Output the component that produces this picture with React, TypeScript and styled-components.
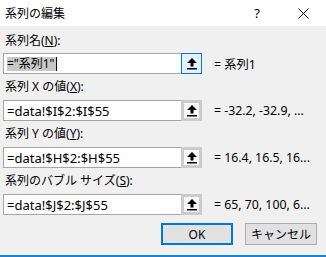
import React from "react";
import styled, { createGlobalStyle } from "styled-components";

const Global = createGlobalStyle`
  html, body { margin: 0; padding: 0; background: #f0f0f0; }
  body { font-family: "Noto Sans", "Noto Sans CJK JP", sans-serif; font-size: 12px; color: #000; }
`;

const Dialog = styled.div`
  width: 326px;
  height: 257px;
  box-sizing: border-box;
  background: #f0f0f0;
  border-bottom: 2px solid #1883d7;
  display: flex;
  flex-direction: column;
  overflow: hidden;
`;

const TitleBar = styled.div`
  height: 26px;
  flex: none;
  background: #ffffff;
  display: flex;
  align-items: center;
  padding-left: 5px;
`;

const Title = styled.div`
  flex: 1;
  font-size: 12px;
  line-height: 26px;
  font-family: "Noto Sans CJK JP", sans-serif;
`;

const TitleButton = styled.div`
  width: 46px;
  height: 26px;
  display: flex;
  align-items: center;
  justify-content: center;
  font-size: 13px;
  font-family: "Noto Sans", sans-serif;
`;

const Body = styled.div`
  display: flex;
  flex-direction: column;
  padding-left: 3px;
`;

const Label = styled.div<{ $first?: boolean }>`
  height: ${(p) => (p.$first ? 27 : 26)}px;
  line-height: 26px;
  padding-top: ${(p) => (p.$first ? 2 : 0)}px;
  box-sizing: border-box;
  padding-left: 2px;
  font-family: "Noto Sans", "Noto Sans CJK JP", sans-serif;
  font-size: 12px;
  white-space: nowrap;
  u { text-decoration: underline; text-underline-offset: 1px; }
`;

const Row = styled.div`
  display: flex;
  align-items: center;
  height: 21px;
`;

const Field = styled.div`
  width: 199px;
  height: 21px;
  box-sizing: border-box;
  border: 1px solid #a5a5a5;
  background: #fff;
  display: flex;
  align-items: stretch;
`;

const FieldText = styled.div`
  flex: 1;
  display: flex;
  align-items: center;
  padding-left: 3px;
  font-family: "Noto Sans", "Noto Sans CJK JP", sans-serif;
  font-size: 13px;
  white-space: nowrap;
  overflow: hidden;
`;

const Selected = styled.span`
  background: #c8c8c8;
  line-height: 14px;
  font-size: 12px;
  padding: 0 1px 0 0;
`;

const Caret = styled.span`
  display: inline-block;
  width: 1px;
  height: 14px;
  background: #000;
`;

const RefButton = styled.div<{ $active?: boolean }>`
  width: 21px;
  margin: -1px -1px -1px 0;
  box-sizing: border-box;
  border: ${(p) => (p.$active ? "1px solid #0078d7" : "3px solid #cccccc")};
  background: ${(p) => (p.$active ? "#e5f1fb" : "#fafafa")};
  display: flex;
  align-items: center;
  justify-content: center;
`;

const Value = styled.div`
  margin-left: 12px;
  font-family: "Noto Sans", "Noto Sans CJK JP", sans-serif;
  font-size: 12.3px;
  white-space: nowrap;
`;

const Buttons = styled.div`
  display: flex;
  justify-content: flex-end;
  gap: 12px;
  padding-right: 9px;
  margin-top: 8px;
`;

const Btn = styled.div<{ $default?: boolean }>`
  width: 72px;
  height: 22px;
  box-sizing: border-box;
  background: #e1e1e1;
  border: ${(p) => (p.$default ? "2px solid #0078d7" : "1px solid #adadad")};
  display: flex;
  align-items: center;
  justify-content: center;
  font-family: "Noto Sans", "Noto Sans CJK JP", sans-serif;
  font-size: 12px;
`;

const UpArrow = () => (
  <svg width="10" height="12" viewBox="0 0 10 12">
    <path d="M5 0 L10 5 L6.5 5 L6.5 8.5 L3.5 8.5 L3.5 5 L0 5 Z" fill="#000" />
    <rect x="0" y="10" width="10" height="1.5" fill="#000" />
  </svg>
);

const CloseIcon = () => (
  <svg width="11" height="11" viewBox="0 0 11 11">
    <path d="M0.5 0.5 L10.5 10.5 M10.5 0.5 L0.5 10.5" stroke="#000" strokeWidth="1" />
  </svg>
);

type Item = { label: React.ReactNode; formula: React.ReactNode; value: string; active?: boolean };

const items: Item[] = [
  {
    label: (
      <>
        系列名(<u>N</u>):
      </>
    ),
    formula: (
      <>
        <Selected>="系列1"</Selected>
        <Caret />
      </>
    ),
    value: "= 系列1",
    active: true,
  },
  {
    label: (
      <>
        系列 X の値(<u>X</u>):
      </>
    ),
    formula: "=data!$I$2:$I$55",
    value: "= -32.2, -32.9, ...",
  },
  {
    label: (
      <>
        系列 Y の値(<u>Y</u>):
      </>
    ),
    formula: "=data!$H$2:$H$55",
    value: "= 16.4, 16.5, 16...",
  },
  {
    label: (
      <>
        系列のバブル サイズ(<u>S</u>):
      </>
    ),
    formula: "=data!$J$2:$J$55",
    value: "= 65, 70, 100, 6...",
  },
];

export default function App() {
  return (
    <>
      <Global />
      <Dialog>
        <TitleBar>
          <Title>系列の編集</Title>
          <TitleButton>?</TitleButton>
          <TitleButton>
            <CloseIcon />
          </TitleButton>
        </TitleBar>
        <Body>
          {items.map((it, i) => (
            <React.Fragment key={i}>
              <Label $first={i === 0}>{it.label}</Label>
              <Row>
                <Field>
                  <FieldText>{it.formula}</FieldText>
                  <RefButton $active={it.active}>
                    <UpArrow />
                  </RefButton>
                </Field>
                <Value>{it.value}</Value>
              </Row>
            </React.Fragment>
          ))}
        </Body>
        <Buttons>
          <Btn $default>OK</Btn>
          <Btn>キャンセル</Btn>
        </Buttons>
      </Dialog>
    </>
  );
}
